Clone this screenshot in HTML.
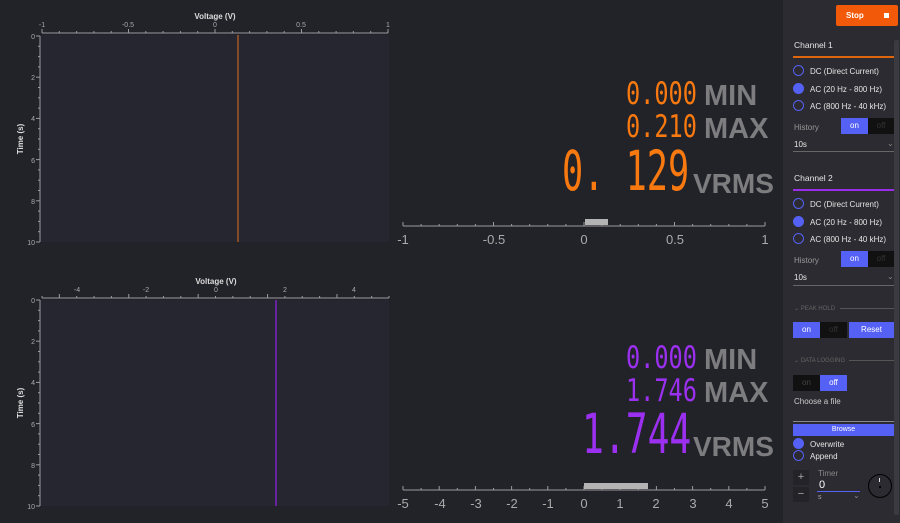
<!DOCTYPE html>
<html><head><meta charset="utf-8">
<style>
*{margin:0;padding:0;box-sizing:border-box}
body{width:900px;height:523px;background:#222229;font-family:"Liberation Sans",sans-serif;position:relative;overflow:hidden;color:#ddd}
.abs{position:absolute}
.seg{position:absolute;font-family:"DejaVu Sans Mono","Liberation Mono",monospace;font-weight:normal;white-space:pre;transform-origin:0 0;line-height:1}
.lbl{position:absolute;font-family:"Liberation Sans",sans-serif;font-weight:bold;color:#7d7d80;line-height:1}
#side{position:absolute;left:783px;top:0;width:117px;height:523px;background:#2b2b31}
.t{position:absolute;font-size:8px;color:#e6e6e6;white-space:nowrap}
.radio{position:absolute;width:11px;height:11px;border-radius:50%;border:1.5px solid #5561f5}
.radio.f{background:#5561f5}
.btn{position:absolute;font-size:8px;text-align:center;color:#fff}
</style></head><body>
<svg class="abs" style="left:0;top:0" width="783" height="523" id="sv">
<rect x="40" y="35" width="349" height="207" fill="#262630"/>
<rect x="40" y="300" width="349" height="206" fill="#262630"/>
<line x1="238" y1="35" x2="238" y2="242" stroke="#e07020" stroke-width="1"/>
<line x1="276" y1="300" x2="276" y2="506" stroke="#8a22d8" stroke-width="1.3"/>
<g id="ticks" stroke="#9a9a9e" stroke-width="1" fill="none"></g>
<g font-family="Liberation Sans, sans-serif" font-size="7" fill="#aaa" text-anchor="middle">
<text x="42" y="27">-1</text><text x="128" y="27">-0.5</text><text x="215" y="27">0</text><text x="301" y="27">0.5</text><text x="388" y="27">1</text>
<text x="77" y="292">-4</text><text x="146" y="292">-2</text><text x="216" y="292">0</text><text x="285" y="292">2</text><text x="354" y="292">4</text>
<g text-anchor="end">
<text x="35" y="39">0</text><text x="35" y="80">2</text><text x="35" y="121">4</text><text x="35" y="163">6</text><text x="35" y="204">8</text><text x="35" y="245">10</text>
<text x="35" y="303">0</text><text x="35" y="344">2</text><text x="35" y="385">4</text><text x="35" y="427">6</text><text x="35" y="468">8</text><text x="35" y="509">10</text>
</g>
<g font-weight="bold" fill="#ddd" font-size="8">
<text x="215" y="19">Voltage (V)</text><text x="216" y="284">Voltage (V)</text>
<text transform="translate(23,139) rotate(-90)">Time (s)</text>
<text transform="translate(23,403) rotate(-90)">Time (s)</text>
</g>
</g>
<g font-family="Liberation Sans, sans-serif" font-size="13" fill="#aaa" text-anchor="middle">
<text x="403" y="244">-1</text><text x="494" y="244">-0.5</text><text x="584" y="244">0</text><text x="675" y="244">0.5</text><text x="765" y="244">1</text>
<text x="403" y="508">-5</text><text x="440" y="508">-4</text><text x="476" y="508">-3</text><text x="512" y="508">-2</text><text x="548" y="508">-1</text><text x="584" y="508">0</text><text x="620" y="508">1</text><text x="656" y="508">2</text><text x="693" y="508">3</text><text x="729" y="508">4</text><text x="765" y="508">5</text>
</g>
<rect x="585" y="219" width="23" height="6" fill="#b4b4b4"/>
<rect x="584" y="483" width="64" height="6" fill="#b4b4b4"/>
</svg>
<script>
var g=document.getElementById('ticks'),s='';
function L(a,b,c,d){s+='<line x1="'+a+'" y1="'+b+'" x2="'+c+'" y2="'+d+'"/>';}
L(42,33,388,33);for(var i=0;i<=20;i++){var x=42+i*17.3;L(x,33,x,i%5==0?29:31);}
L(42,298,389,298);for(var i=0;i<=20;i++){var x=42+i*17.35;L(x,298,x,i%4==1?294:296);}
L(40,36,40,242);for(var i=0;i<=20;i++){var y=36+i*10.3;L(40,y,i%4==0?36:38,y);}
L(40,300,40,506);for(var i=0;i<=20;i++){var y=300+i*10.3;L(40,y,i%4==0?36:38,y);}
L(403,226,765,226);for(var i=0;i<=20;i++){var x=403+i*18.1;L(x,226,x,i%5==0?222:224);}
L(403,490,765,490);for(var i=0;i<=20;i++){var x=403+i*18.1;L(x,490,x,i%2==0?486:488);}
g.innerHTML=s;
</script>

<div class="seg" style="left:626px;top:79px;font-size:31px;color:#f7790f;transform:scaleX(0.76)">0.000</div>
<div class="lbl" style="left:704px;top:82px;font-size:29px">MIN</div>
<div class="seg" style="left:626px;top:112px;font-size:31px;color:#f7790f;transform:scaleX(0.76)">0.210</div>
<div class="lbl" style="left:704px;top:115px;font-size:29px">MAX</div>
<div class="seg" style="left:562px;top:144px;font-size:55px;color:#f7790f;transform:scaleX(0.64)">0. 129</div>
<div class="lbl" style="left:693px;top:170px;font-size:28px">VRMS</div>

<div class="seg" style="left:626px;top:343px;font-size:31px;color:#9b30f0;transform:scaleX(0.76)">0.000</div>
<div class="lbl" style="left:704px;top:346px;font-size:29px">MIN</div>
<div class="seg" style="left:626px;top:376px;font-size:31px;color:#9b30f0;transform:scaleX(0.76)">1.746</div>
<div class="lbl" style="left:704px;top:379px;font-size:29px">MAX</div>
<div class="seg" style="left:582px;top:407px;font-size:55px;color:#9b30f0;transform:scaleX(0.66)">1.744</div>
<div class="lbl" style="left:693px;top:433px;font-size:28px">VRMS</div>

<div id="side">
<div class="abs" style="left:111px;top:40px;width:5px;height:475px;background:#3a3a40;border-radius:2px"></div>
<div class="btn" style="left:53px;top:5px;width:62px;height:21px;background:#f25a0a;border-radius:2px;font-weight:bold;line-height:21px;text-align:left;padding-left:10px">Stop<span style="position:absolute;right:9px;top:8px;width:5px;height:5px;background:#fff"></span></div>
<div class="t" style="left:11px;top:40px;font-size:8.5px">Channel 1</div>
<div class="abs" style="left:10px;top:56px;width:101px;height:1.5px;background:#e0660e"></div>
<div class="radio" style="left:10px;top:65px"></div><div class="t" style="left:27px;top:67px">DC (Direct Current)</div>
<div class="radio f" style="left:10px;top:83px"></div><div class="t" style="left:27px;top:85px">AC (20 Hz - 800 Hz)</div>
<div class="radio" style="left:10px;top:100px"></div><div class="t" style="left:27px;top:102px">AC (800 Hz - 40 kHz)</div>
<div class="t" style="left:11px;top:123px;color:#999">History</div>
<div class="btn" style="left:58px;top:118px;width:27px;height:16px;background:#5561f5;line-height:16px">on</div>
<div class="btn" style="left:85px;top:118px;width:26px;height:16px;background:#111;color:#333;line-height:16px">off</div>
<div class="t" style="left:11px;top:140px">10s</div><div class="t" style="left:104px;top:139px;color:#888">⌄</div>
<div class="abs" style="left:10px;top:151px;width:101px;height:1px;background:#666"></div>

<div class="t" style="left:11px;top:173px;font-size:8.5px">Channel 2</div>
<div class="abs" style="left:10px;top:189px;width:101px;height:1.5px;background:#9a2ee8"></div>
<div class="radio" style="left:10px;top:198px"></div><div class="t" style="left:27px;top:200px">DC (Direct Current)</div>
<div class="radio f" style="left:10px;top:216px"></div><div class="t" style="left:27px;top:218px">AC (20 Hz - 800 Hz)</div>
<div class="radio" style="left:10px;top:233px"></div><div class="t" style="left:27px;top:235px">AC (800 Hz - 40 kHz)</div>
<div class="t" style="left:11px;top:256px;color:#999">History</div>
<div class="btn" style="left:58px;top:251px;width:27px;height:16px;background:#5561f5;line-height:16px">on</div>
<div class="btn" style="left:85px;top:251px;width:26px;height:16px;background:#111;color:#333;line-height:16px">off</div>
<div class="t" style="left:11px;top:273px">10s</div><div class="t" style="left:104px;top:272px;color:#888">⌄</div>
<div class="abs" style="left:10px;top:285px;width:101px;height:1px;background:#666"></div>

<div class="t" style="left:11px;top:305px;font-size:6px;color:#666">⌄ PEAK HOLD</div>
<div class="abs" style="left:57px;top:308px;width:54px;height:1px;background:#555"></div>
<div class="btn" style="left:10px;top:322px;width:27px;height:16px;background:#5561f5;line-height:16px">on</div>
<div class="btn" style="left:37px;top:322px;width:27px;height:16px;background:#111;color:#333;line-height:16px">off</div>
<div class="btn" style="left:66px;top:322px;width:45px;height:16px;background:#5561f5;line-height:16px">Reset</div>

<div class="t" style="left:11px;top:357px;font-size:6px;color:#666">⌄ DATA LOGGING</div>
<div class="abs" style="left:66px;top:360px;width:45px;height:1px;background:#555"></div>
<div class="btn" style="left:10px;top:375px;width:27px;height:16px;background:#111;color:#444;line-height:16px">on</div>
<div class="btn" style="left:37px;top:375px;width:27px;height:16px;background:#5561f5;line-height:16px">off</div>
<div class="t" style="left:11px;top:397px;color:#ccc">Choose a file</div>
<div class="abs" style="left:10px;top:421px;width:101px;height:1px;background:#888"></div>
<div class="btn" style="left:10px;top:424px;width:101px;height:12px;background:#5561f5;line-height:12px;font-size:7px">Browse</div>
<div class="radio f" style="left:10px;top:438px"></div><div class="t" style="left:27px;top:440px">Overwrite</div>
<div class="radio" style="left:10px;top:450px"></div><div class="t" style="left:27px;top:452px">Append</div>
<div class="btn" style="left:10px;top:470px;width:16px;height:15px;background:#232328;line-height:15px;font-size:11px;color:#aaa">+</div>
<div class="btn" style="left:10px;top:487px;width:16px;height:15px;background:#232328;line-height:15px;font-size:11px;color:#aaa">−</div>
<div class="t" style="left:35px;top:469px;color:#888">Timer</div>
<div class="t" style="left:36px;top:479px;font-size:11px;color:#fff">0</div>
<div class="abs" style="left:34px;top:491px;width:43px;height:1px;background:#5561f5"></div>
<div class="t" style="left:35px;top:494px;font-size:7px;color:#aaa">s</div><div class="t" style="left:70px;top:491px;color:#888">⌄</div>
<div class="abs" style="left:85px;top:474px;width:24px;height:24px;border-radius:50%;border:1.5px solid #000"></div>
<div class="abs" style="left:96px;top:478px;width:1px;height:4px;background:#ddd"></div>
<div class="abs" style="left:96px;top:486px;width:2px;height:2px;background:#000"></div>
</div>
</body></html>
